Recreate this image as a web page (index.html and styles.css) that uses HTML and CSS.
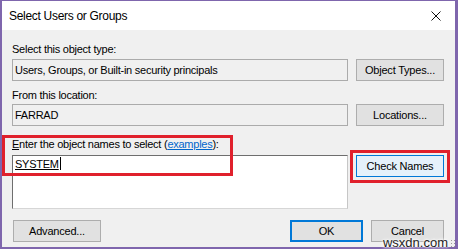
FILE: index.html
```html
<!DOCTYPE html>
<html lang="en">
<head>
    <meta charset="UTF-8">
    <title>Select Users or Groups</title>
    <link rel="stylesheet" href="styles.css">
</head>
<body>
    <div class="dialog">
        <div class="titlebar">
            <span class="title">Select Users or Groups</span>
            <svg class="close" width="10" height="10" viewBox="0 0 10 10">
                <path d="M0.5 0.5 L9.5 9.5 M9.5 0.5 L0.5 9.5" stroke="#111" stroke-width="1" fill="none"/>
            </svg>
        </div>

        <div class="content">
            <div class="label">Select this object type:</div>
            <div class="row">
                <div class="field readonly">Users, Groups, or Built-in security principals</div>
                <button class="btn">Object Types...</button>
            </div>

            <div class="label label-loc">From this location:</div>
            <div class="row">
                <div class="field readonly">FARRAD</div>
                <button class="btn">Locations...</button>
            </div>

            <div class="label label-names"><u>E</u>nter the object names to select (<a href="#">examples</a>):</div>
            <div class="row names-row">
                <div class="field names"><span class="name">SYSTEM</span><span class="caret"></span></div>
                <button class="btn btn-check">Check Names</button>
            </div>

            <div class="footer">
                <button class="btn btn-adv">Advanced...</button>
                <div class="footer-right">
                    <button class="btn btn-default">OK</button>
                    <button class="btn">Cancel</button>
                </div>
            </div>
        </div>

        <!-- annotation boxes drawn over the dialog -->
        <div class="mark mark-names"></div>
        <div class="mark mark-check"></div>

        <div class="watermark">wsxdn.com</div>
        <div class="grip"></div>
    </div>
</body>
</html>
```

FILE: styles.css
```css
* {
    box-sizing: border-box;
    margin: 0;
    padding: 0;
}

body {
    width: 458px;
    height: 252px;
    background: #ffffff;
    font-family: "Liberation Sans", Arial, sans-serif;
    font-size: 11px;
    letter-spacing: -0.25px;
    color: #000;
    overflow: hidden;
}

.dialog {
    position: relative;
    width: 458px;
    height: 249px;
    background: #f0f0f0;
    border: 2px solid #7f66ad;
    border-top-width: 1px;
    border-right-width: 3px;
}

.titlebar {
    height: 29px;
    background: #fff;
    display: flex;
    align-items: center;
    justify-content: space-between;
    padding: 1px 14px 0 7px;
}

.title {
    font-size: 12px;
    letter-spacing: -0.3px;
    color: #000;
}

.close {
    display: block;
    margin-top: -1px;
}

.content {
    padding: 13px 11px 0 10px;
}

.label {
    height: 13px;
    line-height: 13px;
    margin-bottom: 3px;
}

.label-loc {
    margin-top: 8px;
    margin-bottom: 2px;
}

.label-names {
    margin-top: 12px;
    margin-bottom: 4px;
}

.label-names a {
    color: #0066cc;
}

.row {
    display: flex;
    align-items: flex-start;
    gap: 8px;
}

.field {
    flex: 1;
    height: 22px;
    line-height: 20px;
    padding: 0 2px;
    border: 1px solid #ababab;
    white-space: nowrap;
}

.readonly {
    background: #f0f0f0;
}

.names {
    height: 54px;
    background: #fff;
    line-height: 12px;
    padding-top: 1px;
    border-color: #6e6e6e #c6c6c6 #d6d6d6 #6e6e6e;
    display: flex;
    align-items: flex-start;
}

.name {
    text-decoration: underline;
    line-height: 12px;
    padding-top: 1px;
}

.caret {
    display: inline-block;
    width: 1px;
    height: 13px;
    background: #000;
    margin-left: 1px;
}

.btn {
    width: 88px;
    height: 22px;
    background: #e1e1e1;
    border: 1px solid #adadad;
    font-family: inherit;
    font-size: 11px;
    line-height: 11px;
    letter-spacing: -0.2px;
    color: #000;
}

.btn-check {
    background: #e5f1fb;
    border-color: #0078d7;
}

.btn-default {
    border: 2px solid #0078d7;
    width: 73px;
}

.footer {
    display: flex;
    justify-content: space-between;
    margin-top: 11px;
}

.btn-adv {
    margin-left: 1px;
}

.footer-right {
    display: flex;
    gap: 8px;
}

.footer-right .btn:last-child {
    width: 73px;
}

.mark {
    position: absolute;
    border: 3px solid #e0202c;
}

.mark-names {
    left: 0;
    top: 134px;
    width: 231px;
    height: 41px;
}

.mark-check {
    left: 348px;
    top: 149px;
    width: 100px;
    height: 33px;
}

.watermark {
    position: absolute;
    right: 7px;
    bottom: -1px;
    font-size: 13px;
    line-height: 11px;
    letter-spacing: 0;
    color: #1e1e1e;
    text-shadow: 0 0 2px #fff, 0 0 3px #fff, 0 0 4px #fff;
}

.grip {
    position: absolute;
    right: 0;
    bottom: 0;
    width: 5px;
    height: 8px;
    background-image: radial-gradient(circle, #9a9a9a 0.8px, transparent 1px);
    background-size: 3px 3px;
}
```
